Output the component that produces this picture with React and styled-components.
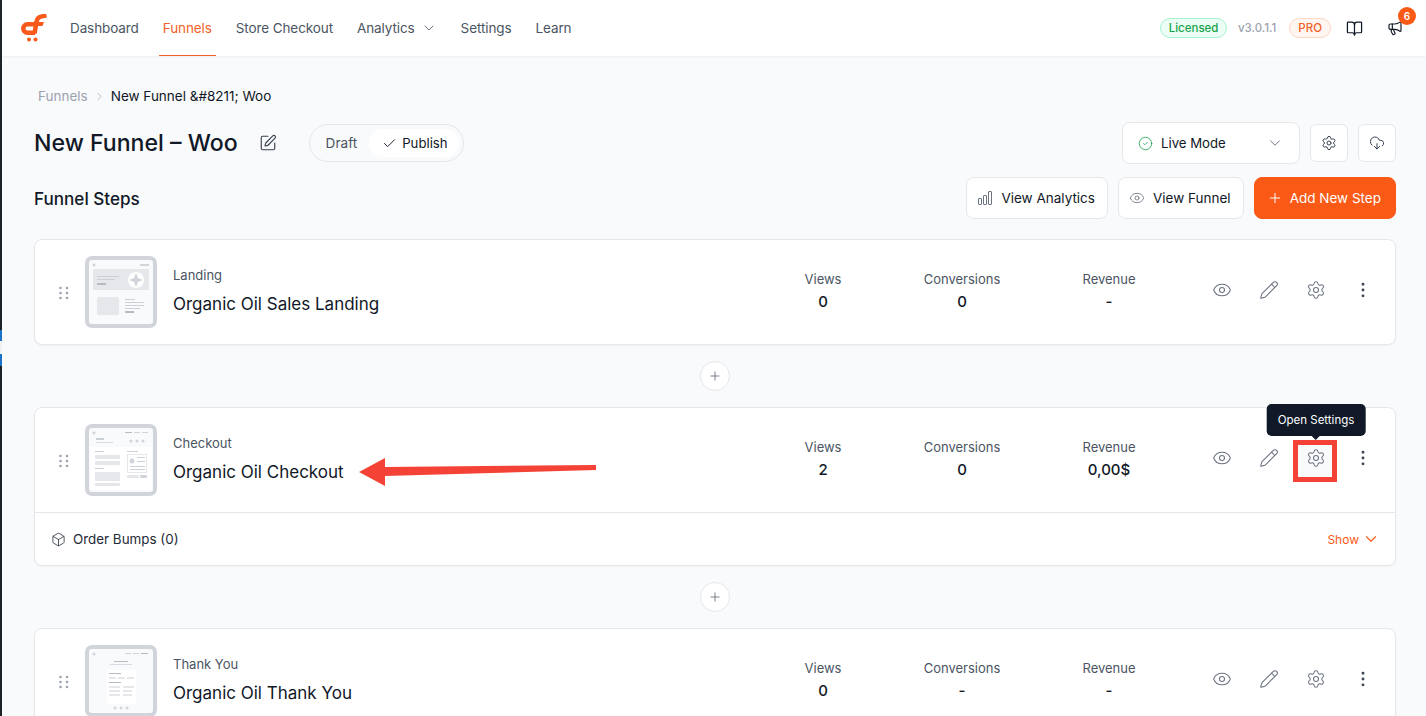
import React from "react";
import styled, { createGlobalStyle } from "styled-components";
import {
  ChevronDown,
  ChevronRight,
  Check,
  Plus,
  Eye,
  Pencil,
  Settings,
  EllipsisVertical,
  SquarePen,
  CircleCheck,
  CloudDownload,
  BookOpen,
  Megaphone,
  Box,
} from "lucide-react";

const GlobalStyle = createGlobalStyle`
  html, body {
    margin: 0;
    padding: 0;
    height: 716px;
    overflow: hidden;
    background: #f9fafb;
    font-family: Inter, "Liberation Sans", sans-serif;
    color: #111827;
  }
`;

const Page = styled.div`
  position: relative;
  height: 716px;
  box-sizing: border-box;
  overflow: hidden;
  padding-left: 2px;
  background: #f9fafb;
`;

// dark admin menu edge, with its blue marks peeking in at the left
const EdgeStrip = styled.div`
  position: absolute;
  left: 0;
  top: 0;
  width: 2px;
  height: 100%;
  background: linear-gradient(
    #1d2327 0 330px,
    #1a73c8 330px 341px,
    #f0f0f1 341px 354px,
    #1a73c8 354px 366px,
    #1d2327 366px
  );
`;

const TopBar = styled.header`
  display: flex;
  align-items: center;
  height: 56px;
  padding: 0 23px 0 18px;
  background: #fff;
  box-shadow: 0 1px 2px rgba(0, 0, 0, 0.05);
`;

const Logo = styled.svg`
  width: 27px;
  height: 28px;
  margin-right: 23px;
`;

const Nav = styled.nav`
  display: flex;
  align-items: center;
  gap: 24px;
  height: 100%;
`;

const NavItem = styled.a`
  display: flex;
  align-items: center;
  gap: 6px;
  height: 100%;
  box-sizing: border-box;
  font-size: 13.5px;
  font-weight: 400;
  letter-spacing: -0.1px;
  color: ${(p) => (p.$active ? "#f16227" : "#4b5563")};
  position: relative;

  &::after {
    content: "";
    display: ${(p) => (p.$active ? "block" : "none")};
    position: absolute;
    left: -4px;
    right: -4px;
    bottom: 0;
    height: 1px;
    background: #f16227;
  }
`;

const BarRight = styled.div`
  margin-left: auto;
  display: flex;
  align-items: center;
`;

const LicenseTag = styled.span`
  font-size: 11.5px;
  font-weight: 500;
  color: #16a34a;
  background: #ecfdf5;
  border: 1px solid #a7f3d0;
  border-radius: 10px;
  padding: 2px 7.5px;
  line-height: 14px;
`;

const Version = styled.span`
  font-size: 11.5px;
  font-weight: 500;
  color: #9ca3af;
  margin: 0 13px 0 11px;
`;

const ProTag = styled.span`
  font-size: 11.5px;
  font-weight: 500;
  color: #f16227;
  background: #fff5f1;
  border: 1px solid #fed7c7;
  border-radius: 10px;
  padding: 2px 8px;
  line-height: 14px;
  margin-right: 15px;
`;

const BarIcon = styled.span`
  position: relative;
  display: inline-flex;
  color: #111827;
  margin-left: ${(p) => p.$gap || 0}px;
`;

const Badge = styled.span`
  position: absolute;
  top: -13px;
  right: -13px;
  width: 18px;
  height: 18px;
  border-radius: 50%;
  background: #fa5a16;
  color: #fff;
  font-size: 10px;
  font-weight: 600;
  display: flex;
  align-items: center;
  justify-content: center;
`;

const Content = styled.main`
  padding: 32px 30px 0 32px;
`;

const Crumbs = styled.div`
  display: flex;
  align-items: center;
  height: 16px;
  margin-left: 4px;
  font-size: 13.5px;
  color: #9ca3af;
  gap: 5px;
`;

const CrumbCurrent = styled.span`
  color: #111827;
`;

const TitleRow = styled.div`
  display: flex;
  align-items: center;
  margin-top: 19px;
  height: 40px;
`;

const Title = styled.h1`
  margin: 0;
  font-size: 23.1px;
  font-weight: 500;
  color: #111827;
`;

const EditButton = styled.span`
  display: inline-flex;
  color: #374151;
  margin-left: 21px;
`;

const StatusToggle = styled.div`
  display: flex;
  align-items: center;
  height: 38px;
  box-sizing: border-box;
  margin-left: 32px;
  padding: 4px;
  border: 1px solid #e5e7eb;
  border-radius: 19px;
`;

const ToggleOption = styled.span`
  display: flex;
  align-items: center;
  gap: 5px;
  height: 28px;
  padding: ${(p) => (p.$on ? "0 11px 0 13px" : "0 12px")};
  border-radius: 14px;
  font-size: ${(p) => (p.$on ? 13.2 : 13.6)}px;
  color: ${(p) => (p.$on ? "#111827" : "#4b5563")};
  background: ${(p) => (p.$on ? "#fff" : "transparent")};
`;

const RightGroup = styled.div`
  margin-left: auto;
  display: flex;
  align-items: center;
  gap: 10px;
`;

const ModeSelect = styled.div`
  display: flex;
  align-items: center;
  width: 178px;
  height: 42px;
  box-sizing: border-box;
  padding: 0 15px;
  gap: 8px;
  background: #fff;
  border: 1px solid #e5e7eb;
  border-radius: 8px;
  font-size: 13.2px;
  color: #111827;

  svg:last-child {
    margin-left: auto;
    color: #6b7280;
  }
`;

const SquareButton = styled.span`
  display: flex;
  align-items: center;
  justify-content: center;
  width: 38px;
  height: 38px;
  box-sizing: border-box;
  background: #fff;
  border: 1px solid #e5e7eb;
  border-radius: 6px;
  color: #374151;
`;

const StepsHead = styled.div`
  display: flex;
  align-items: center;
  justify-content: space-between;
  margin-top: 14px;
  height: 42px;
`;

const SectionTitle = styled.h2`
  margin: 0;
  font-size: 17.1px;
  font-weight: 500;
  color: #111827;
`;

const Actions = styled.div`
  display: flex;
  gap: 10px;
`;

const ActionButton = styled.button`
  display: flex;
  align-items: center;
  gap: ${(p) => (p.$primary ? 7 : 8)}px;
  height: 42px;
  padding: ${(p) => (p.$primary ? "0 14px 0 12px" : "0 12px 0 10px")};
  border-radius: 8px;
  font-family: inherit;
  font-size: 13.5px;
  border: 1px solid ${(p) => (p.$primary ? "#fa5a16" : "#e5e7eb")};
  background: ${(p) => (p.$primary ? "#fa5a16" : "#fff")};
  color: ${(p) => (p.$primary ? "#fff" : "#111827")};

  svg {
    color: ${(p) => (p.$primary ? "#fff" : "#6b7280")};
  }
`;

const StepCard = styled.section`
  margin-top: ${(p) => p.$top || 0}px;
  background: #fff;
  border: 1px solid #e5e7eb;
  border-radius: 8px;
  box-shadow: 0 1px 2px rgba(0, 0, 0, 0.04);
`;

const StepMain = styled.div`
  display: grid;
  grid-template-columns: 50px 72px 16px 1fr 140px 138px 156px 208px;
  align-items: center;
  height: 104px;
`;

const Handle = styled.svg`
  width: 12px;
  height: 16px;
  margin: 2px 0 0 23px;
  fill: #9ca3af;
`;

const Thumb = styled.svg`
  width: 72px;
  height: 72px;
`;

const StepInfo = styled.div`
  display: flex;
  flex-direction: column;
  gap: 10px;
  margin-top: -3px;
`;

const StepType = styled.span`
  font-size: 13px;
  color: #4b5563;
  line-height: 16px;
`;

const StepName = styled.span`
  font-size: 17px;
  font-weight: 400;
  color: #111827;
  line-height: 22px;
`;

const Metric = styled.div`
  display: flex;
  flex-direction: column;
  align-items: center;
  gap: 5px;
  margin-top: -2px;
`;

const MetricLabel = styled.span`
  font-size: 13px;
  color: #4b5563;
  line-height: 16px;
`;

const MetricValue = styled.span`
  font-size: 15px;
  font-weight: 500;
  color: #111827;
  line-height: 20px;
`;

const StepTools = styled.div`
  display: flex;
  align-items: center;
  justify-content: flex-end;
  gap: 27px;
  padding-right: 22px;
  margin-top: -4px;
  color: #6b7280;

  > svg:last-child {
    color: #374151;
  }
`;

const ToolSlot = styled.span`
  position: relative;
  display: inline-flex;

  svg {
    position: relative;
  }
`;

const Tooltip = styled.span`
  position: absolute;
  left: 50%;
  bottom: 32px;
  transform: translateX(-50%);
  white-space: nowrap;
  padding: 0 11px;
  height: 32px;
  display: flex;
  align-items: center;
  background: #111827;
  color: #fff;
  font-size: 11.5px;
  border-radius: 5px;

  &::after {
    content: "";
    position: absolute;
    left: 50%;
    bottom: -4px;
    margin-left: -5px;
    border: 5px solid transparent;
    border-bottom: 0;
    border-top-color: #111827;
  }
`;

const Highlight = styled.span`
  position: absolute;
  left: -13px;
  top: -8px;
  width: 34px;
  height: 32px;
  border: 5px solid #f44336;
  background: #f9fafb;
`;

const Arrow = styled.svg`
  position: absolute;
  left: 359px;
  top: 458px;
  width: 238px;
  height: 28px;
`;

const BumpsRow = styled.div`
  display: flex;
  align-items: center;
  height: 52px;
  padding: 0 15px 0 16px;
  border-top: 1px solid #e5e7eb;
  font-size: 13.4px;
  color: #1f2937;
  gap: 7px;
`;

const ShowLink = styled.span`
  margin-left: auto;
  display: flex;
  align-items: center;
  gap: 3px;
  color: #fa5a16;
  font-size: 12px;
`;

const AddBetween = styled.div`
  display: flex;
  justify-content: center;
  margin-top: 16px;
  margin-left: -1px;
`;

const RoundAdd = styled.span`
  display: flex;
  align-items: center;
  justify-content: center;
  width: 30px;
  height: 30px;
  box-sizing: border-box;
  border: 1px solid #e5e7eb;
  border-radius: 50%;
  background: #fff;
  color: #4b5563;
`;

function CartLogo() {
  return (
    <Logo viewBox="0 0 27 28">
      <path
        d="M15 10.25 H7.5 A4.25 4.25 0 0 0 7.5 18.75 H15"
        fill="none"
        stroke="#f9591a"
        strokeWidth="4.5"
      />
      <path
        d="M14.5 19.5 L16.5 8 Q17.2 3.2 21 2.6 L26.5 1.4"
        fill="none"
        stroke="#f9591a"
        strokeWidth="4.5"
      />
      <path d="M14 8 H24 L22.5 12 H14 Z" fill="#f9591a" />
      <circle cx="9" cy="25.5" r="2" fill="#f9591a" />
      <circle cx="15.5" cy="25.5" r="2" fill="#f9591a" />
    </Logo>
  );
}

function DragDots() {
  return (
    <Handle viewBox="0 0 12 16">
      <circle cx="2.5" cy="3" r="1.3" />
      <circle cx="9" cy="3" r="1.3" />
      <circle cx="2.5" cy="8" r="1.3" />
      <circle cx="9" cy="8" r="1.3" />
      <circle cx="2.5" cy="13" r="1.3" />
      <circle cx="9" cy="13" r="1.3" />
    </Handle>
  );
}

function BarsIcon() {
  return (
    <svg width="16" height="16" viewBox="0 0 16 16" fill="none" stroke="currentColor" strokeWidth="1">
      <rect x="1.5" y="8.5" width="3" height="6" rx="0.5" />
      <rect x="6.5" y="5.5" width="3" height="9" rx="0.5" />
      <rect x="11.5" y="1.5" width="3" height="13" rx="0.5" />
    </svg>
  );
}

function Frame({ children }) {
  return (
    <Thumb viewBox="0 0 72 72">
      <rect x="2" y="2" width="68" height="68" rx="5" fill="#f9fafb" stroke="#d1d5db" strokeWidth="4" />
      <circle cx="9" cy="9" r="1.5" fill="#d1d5db" />
      {children}
    </Thumb>
  );
}

function LandingThumb() {
  return (
    <Frame>
      <rect x="55" y="8" width="9" height="2" fill="#d1d5db" />
      <rect x="8" y="13" width="56" height="21" fill="#e5e7eb" />
      <rect x="12" y="20" width="22" height="1" fill="#cbd0d6" />
      <rect x="12" y="23" width="18" height="1" fill="#cbd0d6" />
      <rect x="12" y="27" width="9" height="2" fill="#b6bbc2" />
      <circle cx="51" cy="24" r="8" fill="#fff" />
      <path d="M51 17 L53 22 L58 24 L53 26 L51 31 L49 26 L44 24 L49 22 Z" fill="#d1d5db" />
      <rect x="12" y="41" width="22" height="18" rx="2" fill="#e5e7eb" />
      <rect x="40" y="43" width="10" height="1" fill="#cbd0d6" />
      <rect x="40" y="46" width="19" height="1" fill="#cbd0d6" />
      <rect x="40" y="49" width="19" height="1" fill="#cbd0d6" />
      <rect x="40" y="52" width="15" height="1" fill="#cbd0d6" />
      <rect x="40" y="55" width="9" height="2" fill="#b6bbc2" />
    </Frame>
  );
}

function CheckoutThumb() {
  return (
    <Frame>
      <rect x="40" y="8" width="7" height="1" fill="#b6bbc2" />
      <rect x="49" y="8" width="6" height="1" fill="#d1d5db" />
      <rect x="57" y="8" width="6" height="1" fill="#d1d5db" />
      <rect x="11" y="14" width="8" height="2" fill="#cbd0d6" />
      <rect x="11" y="18" width="17" height="1" fill="#d8dbe0" />
      <circle cx="46" cy="17" r="1.5" fill="#d1d5db" />
      <circle cx="52" cy="17" r="1.5" fill="#d1d5db" />
      <circle cx="58" cy="17" r="1.5" fill="#d1d5db" />
      <rect x="5" y="23" width="62" height="43" fill="#fff" />
      <rect x="10" y="27" width="9" height="1" fill="#cbd0d6" />
      <rect x="10" y="31" width="25" height="4" rx="1" fill="#e5e7eb" />
      <rect x="10" y="37" width="25" height="4" rx="1" fill="#e5e7eb" />
      <rect x="10" y="44" width="9" height="1" fill="#cbd0d6" />
      <rect x="10" y="48" width="25" height="9" rx="1" fill="#e5e7eb" />
      <rect x="10" y="59" width="25" height="3" rx="1" fill="#e5e7eb" />
      <rect x="42" y="27" width="11" height="1" fill="#cbd0d6" />
      <rect x="42.5" y="30.5" width="19" height="18" fill="#fff" stroke="#e5e7eb" />
      <circle cx="47" cy="37" r="2.5" fill="#d1d5db" />
      <rect x="52" y="33" width="8" height="1" fill="#cbd0d6" />
      <rect x="52" y="37" width="8" height="1" fill="#cbd0d6" />
      <rect x="45" y="42" width="15" height="1" fill="#cbd0d6" />
      <rect x="45" y="45" width="15" height="1" fill="#cbd0d6" />
      <rect x="42" y="51" width="12" height="3" rx="1" fill="#e5e7eb" />
      <rect x="55" y="51" width="7" height="3" rx="1" fill="#d1d5db" />
    </Frame>
  );
}

function ThanksThumb() {
  return (
    <Frame>
      <rect x="40" y="8" width="6" height="1" fill="#d1d5db" />
      <rect x="48" y="8" width="6" height="1" fill="#d1d5db" />
      <rect x="56" y="8" width="7" height="1" fill="#b6bbc2" />
      <rect x="29" y="16" width="14" height="1" fill="#b6bbc2" />
      <rect x="25" y="19" width="22" height="1" fill="#d8dbe0" />
      <rect x="22" y="25" width="29" height="34" fill="#fff" />
      <rect x="24" y="28" width="12" height="1" fill="#b6bbc2" />
      <rect x="24" y="32" width="7" height="2" fill="#e5e7eb" />
      <rect x="33" y="32" width="7" height="2" fill="#e5e7eb" />
      <rect x="42" y="32" width="7" height="2" fill="#e5e7eb" />
      <rect x="24" y="37" width="12" height="1" fill="#b6bbc2" />
      <rect x="24" y="41" width="11" height="2" fill="#e5e7eb" />
      <rect x="38" y="41" width="11" height="2" fill="#e5e7eb" />
      <rect x="24" y="45" width="11" height="2" fill="#e5e7eb" />
      <rect x="38" y="45" width="9" height="2" fill="#e5e7eb" />
      <rect x="24" y="49" width="11" height="2" fill="#e5e7eb" />
      <rect x="38" y="49" width="9" height="2" fill="#e5e7eb" />
      <circle cx="30" cy="63" r="1.5" fill="#d1d5db" />
      <circle cx="36" cy="63" r="1.5" fill="#d1d5db" />
      <circle cx="42" cy="63" r="1.5" fill="#d1d5db" />
    </Frame>
  );
}

function Step({ thumb, type, name, views, conversions, revenue, tip, top, children }) {
  return (
    <StepCard $top={top}>
      <StepMain>
        <DragDots />
        {thumb}
        <span />
        <StepInfo>
          <StepType>{type}</StepType>
          <StepName>{name}</StepName>
        </StepInfo>
        <Metric>
          <MetricLabel>Views</MetricLabel>
          <MetricValue>{views}</MetricValue>
        </Metric>
        <Metric>
          <MetricLabel>Conversions</MetricLabel>
          <MetricValue>{conversions}</MetricValue>
        </Metric>
        <Metric>
          <MetricLabel>Revenue</MetricLabel>
          <MetricValue>{revenue}</MetricValue>
        </Metric>
        <StepTools>
          <Eye size={20} strokeWidth={1.25} />
          <Pencil size={20} strokeWidth={1.25} />
          <ToolSlot>
            {tip && <Highlight />}
            <Settings size={20} strokeWidth={1.25} />
            {tip && <Tooltip>Open Settings</Tooltip>}
          </ToolSlot>
          <EllipsisVertical size={20} strokeWidth={1.5} />
        </StepTools>
      </StepMain>
      {children}
    </StepCard>
  );
}

export default function App() {
  return (
    <>
      <GlobalStyle />
      <Page>
        <EdgeStrip />
        <TopBar>
          <CartLogo />
          <Nav>
            <NavItem>Dashboard</NavItem>
            <NavItem $active>Funnels</NavItem>
            <NavItem>Store Checkout</NavItem>
            <NavItem>
              Analytics <ChevronDown size={16} strokeWidth={1.25} />
            </NavItem>
            <NavItem>Settings</NavItem>
            <NavItem>Learn</NavItem>
          </Nav>
          <BarRight>
            <LicenseTag>Licensed</LicenseTag>
            <Version>v3.0.1.1</Version>
            <ProTag>PRO</ProTag>
            <BarIcon>
              <BookOpen size={17} strokeWidth={1.75} />
            </BarIcon>
            <BarIcon $gap={24}>
              <Megaphone size={16} strokeWidth={1.75} />
              <Badge>6</Badge>
            </BarIcon>
          </BarRight>
        </TopBar>
        <Content>
          <Crumbs>
            Funnels <ChevronRight size={13} strokeWidth={1.25} />
            <CrumbCurrent>New Funnel &amp;#8211; Woo</CrumbCurrent>
          </Crumbs>
          <TitleRow>
            <Title>New Funnel – Woo</Title>
            <EditButton>
              <SquarePen size={18} strokeWidth={1.5} />
            </EditButton>
            <StatusToggle>
              <ToggleOption>Draft</ToggleOption>
              <ToggleOption $on>
                <Check size={15} strokeWidth={1.5} /> Publish
              </ToggleOption>
            </StatusToggle>
            <RightGroup>
              <ModeSelect>
                <CircleCheck size={15} strokeWidth={1.25} color="#16a34a" />
                Live Mode
                <ChevronDown size={18} strokeWidth={1.25} />
              </ModeSelect>
              <SquareButton>
                <Settings size={16} strokeWidth={1.5} />
              </SquareButton>
              <SquareButton>
                <CloudDownload size={16} strokeWidth={1.5} />
              </SquareButton>
            </RightGroup>
          </TitleRow>
          <StepsHead>
            <SectionTitle>Funnel Steps</SectionTitle>
            <Actions>
              <ActionButton>
                <BarsIcon /> View Analytics
              </ActionButton>
              <ActionButton>
                <Eye size={16} strokeWidth={1.25} /> View Funnel
              </ActionButton>
              <ActionButton $primary>
                <Plus size={16} strokeWidth={1.5} /> Add New Step
              </ActionButton>
            </Actions>
          </StepsHead>
          <Step
            top={20}
            thumb={<LandingThumb />}
            type="Landing"
            name="Organic Oil Sales Landing"
            views="0"
            conversions="0"
            revenue="-"
          />
          <AddBetween>
            <RoundAdd>
              <Plus size={14} strokeWidth={1.25} />
            </RoundAdd>
          </AddBetween>
          <Step
            top={16}
            thumb={<CheckoutThumb />}
            type="Checkout"
            name="Organic Oil Checkout"
            views="2"
            conversions="0"
            revenue="0,00$"
            tip
          >
            <BumpsRow>
              <Box size={15} strokeWidth={1.25} />
              Order Bumps (0)
              <ShowLink>
                Show <ChevronDown size={18} strokeWidth={1.5} />
              </ShowLink>
            </BumpsRow>
          </Step>
          <AddBetween>
            <RoundAdd>
              <Plus size={14} strokeWidth={1.25} />
            </RoundAdd>
          </AddBetween>
          <Step
            top={16}
            thumb={<ThanksThumb />}
            type="Thank You"
            name="Organic Oil Thank You"
            views="0"
            conversions="-"
            revenue="-"
          />
        </Content>
        <Arrow viewBox="0 0 238 28">
          <path d="M0 14 L26 0 L26 9 L237 7 L237 12 L26 18 L26 28 Z" fill="#f44336" />
        </Arrow>
      </Page>
    </>
  );
}
